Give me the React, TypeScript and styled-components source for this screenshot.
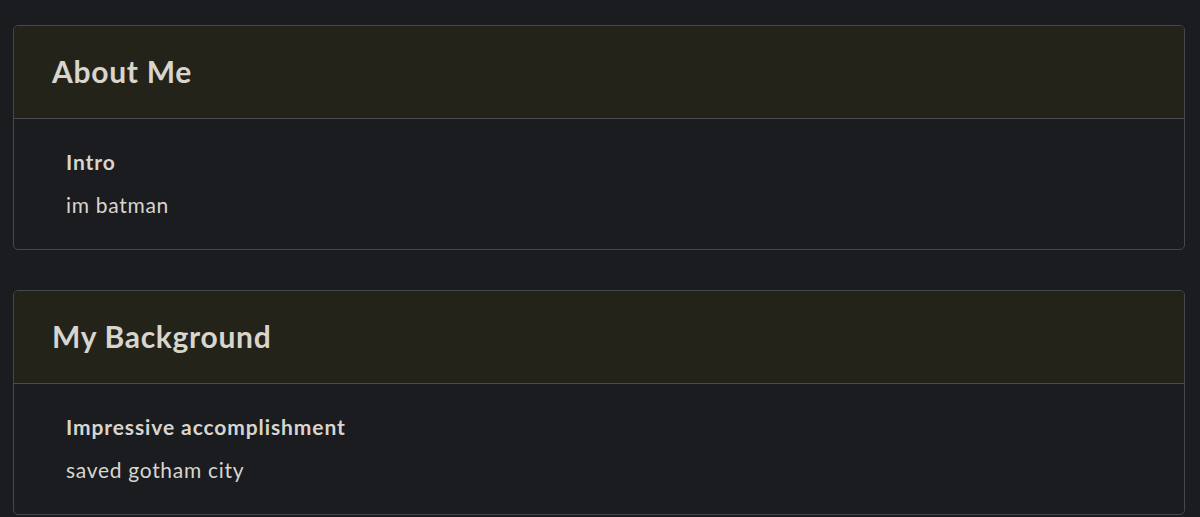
import React from 'react';
import styled, {createGlobalStyle} from "styled-components";

const GlobalStyle = createGlobalStyle`
    html, body {
        margin: 0;
        background: #1b1c1f;
    }
    body {
        font-family: Lato, "Noto Sans", sans-serif;
        color: #d8d5ce;
    }
`;

const Page = styled.div`
    display: flex;
    flex-direction: column;
    gap: 40px;
    padding: 25px 15px 0 13px;
`;

const Card = styled.section`
    border: 1px solid #45474a;
    border-radius: 5px;
    overflow: hidden;
`;

const CardHeader = styled.div`
    height: 93px;
    display: flex;
    align-items: center;
    padding: 0 0 3px 38px;
    box-sizing: border-box;
    background: #23231a;
    border-bottom: 1px solid #4a4c4d;
`;

const Title = styled.h2`
    margin: 0;
    font-size: 30px;
    font-weight: 700;
    letter-spacing: 0.7px;
    color: #d8d5ce;
`;

const CardBody = styled.div`
    padding: 28px 52px 29px;
`;

const Label = styled.div`
    font-size: 21px;
    font-weight: 700;
    letter-spacing: 0.9px;
    line-height: 30px;
    margin-bottom: 13px;
`;

const Value = styled.div`
    font-size: 21px;
    letter-spacing: 0.7px;
    line-height: 30px;
`;

type Field = { label: string; value: string };

const sections: { title: string; fields: Field[] }[] = [
    {title: 'About Me', fields: [{label: 'Intro', value: 'im batman'}]},
    {title: 'My Background', fields: [{label: 'Impressive accomplishment', value: 'saved gotham city'}]},
];

const App: React.FC = () => (
    <>
        <GlobalStyle/>
        <Page>
            {sections.map(s => (
                <Card key={s.title}>
                    <CardHeader>
                        <Title>{s.title}</Title>
                    </CardHeader>
                    <CardBody>
                        {s.fields.map(f => (
                            <div key={f.label}>
                                <Label>{f.label}</Label>
                                <Value>{f.value}</Value>
                            </div>
                        ))}
                    </CardBody>
                </Card>
            ))}
        </Page>
    </>
);

export default App;
